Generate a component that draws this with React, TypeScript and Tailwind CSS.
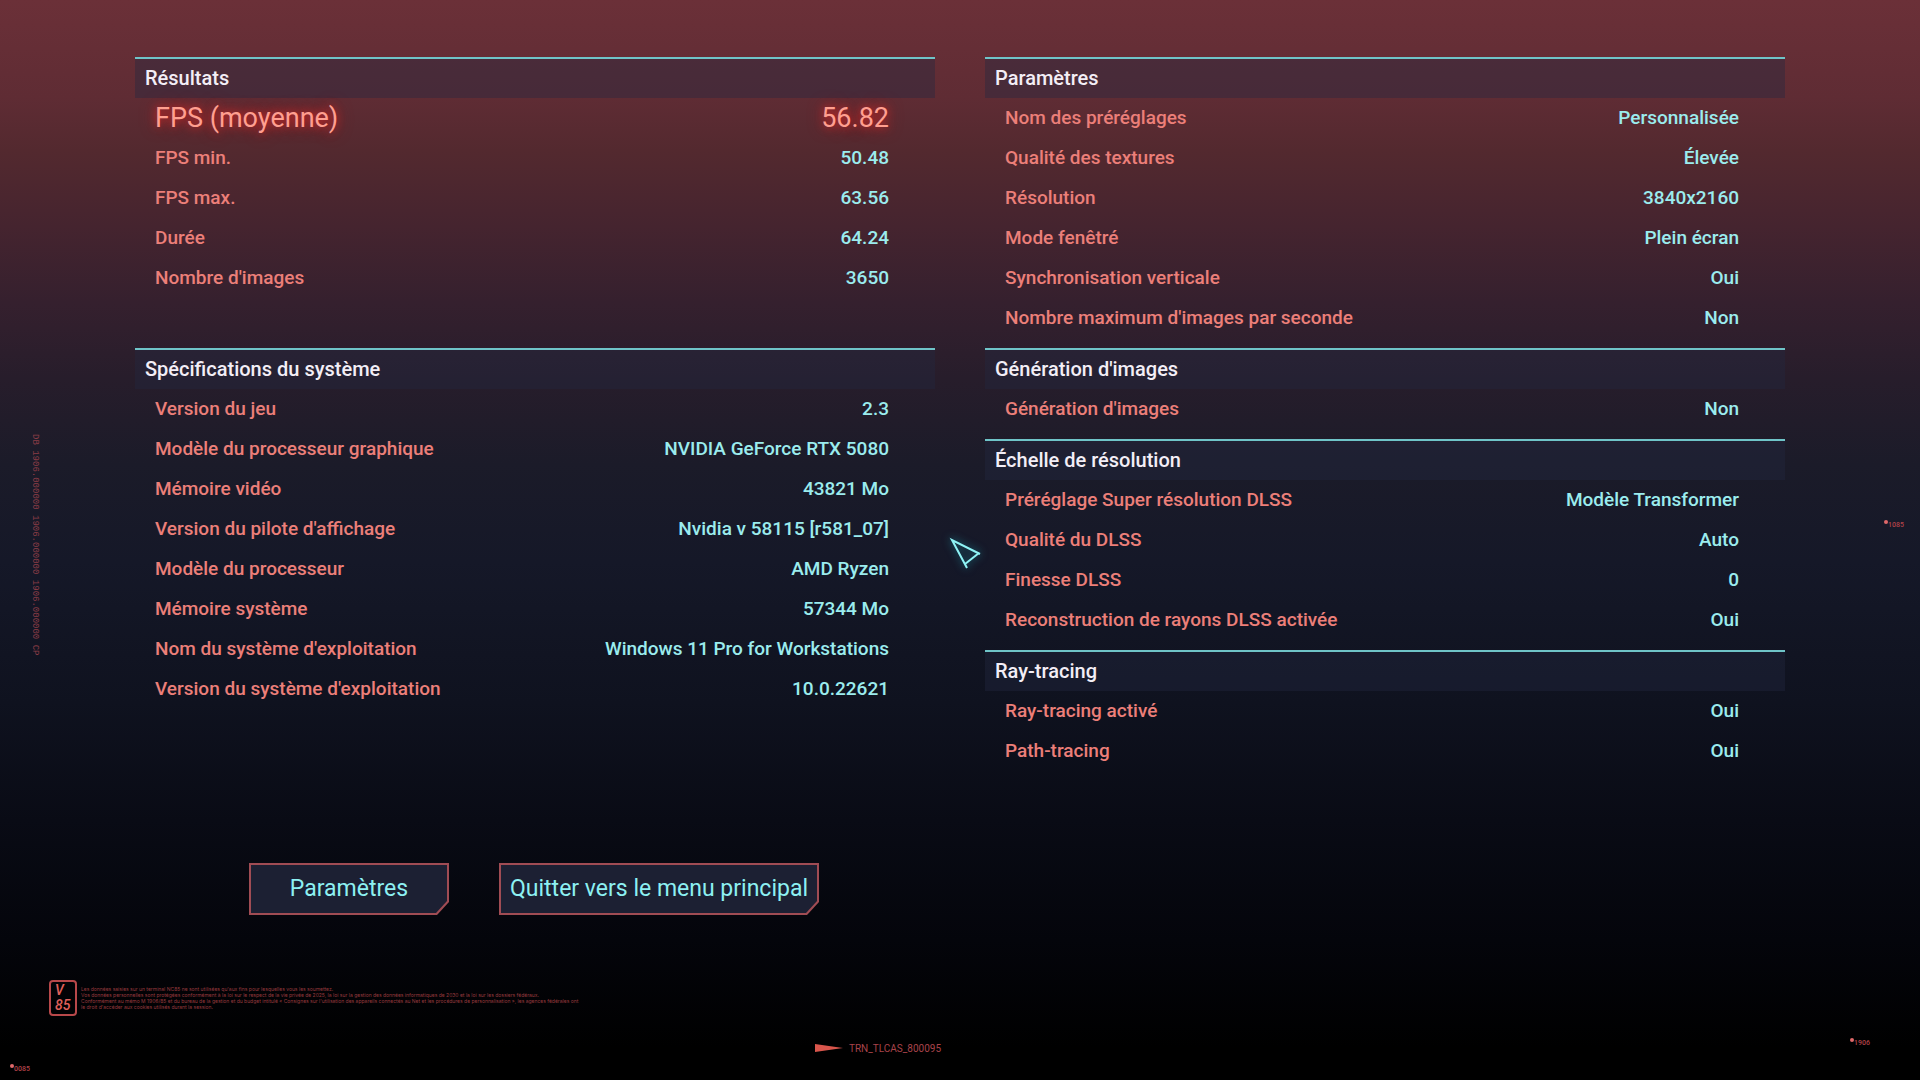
type Row = { label: string; value: string; highlight?: boolean }
type Section = { title: string; rows: Row[] }

const RESULTS: Section[] = [
  {
    title: "Résultats",
    rows: [
      { label: "FPS (moyenne)", value: "56.82", highlight: true },
      { label: "FPS min.", value: "50.48" },
      { label: "FPS max.", value: "63.56" },
      { label: "Durée", value: "64.24" },
      { label: "Nombre d'images", value: "3650" },
    ],
  },
  {
    title: "Spécifications du système",
    rows: [
      { label: "Version du jeu", value: "2.3" },
      { label: "Modèle du processeur graphique", value: "NVIDIA GeForce RTX 5080" },
      { label: "Mémoire vidéo", value: "43821 Mo" },
      { label: "Version du pilote d'affichage", value: "Nvidia v 58115 [r581_07]" },
      { label: "Modèle du processeur", value: "AMD Ryzen" },
      { label: "Mémoire système", value: "57344 Mo" },
      { label: "Nom du système d'exploitation", value: "Windows 11 Pro for Workstations" },
      { label: "Version du système d'exploitation", value: "10.0.22621" },
    ],
  },
]

const SETTINGS: Section[] = [
  {
    title: "Paramètres",
    rows: [
      { label: "Nom des préréglages", value: "Personnalisée" },
      { label: "Qualité des textures", value: "Élevée" },
      { label: "Résolution", value: "3840x2160" },
      { label: "Mode fenêtré", value: "Plein écran" },
      { label: "Synchronisation verticale", value: "Oui" },
      { label: "Nombre maximum d'images par seconde", value: "Non" },
    ],
  },
  {
    title: "Génération d'images",
    rows: [{ label: "Génération d'images", value: "Non" }],
  },
  {
    title: "Échelle de résolution",
    rows: [
      { label: "Préréglage Super résolution DLSS", value: "Modèle Transformer" },
      { label: "Qualité du DLSS", value: "Auto" },
      { label: "Finesse DLSS", value: "0" },
      { label: "Reconstruction de rayons DLSS activée", value: "Oui" },
    ],
  },
  {
    title: "Ray-tracing",
    rows: [
      { label: "Ray-tracing activé", value: "Oui" },
      { label: "Path-tracing", value: "Oui" },
    ],
  },
]

const LEGAL = [
  "Les données saisies sur un terminal NC85 ne sont utilisées qu'aux fins pour lesquelles vous les soumettez.",
  "Vos données personnelles sont protégées conformément à la loi sur le respect de la vie privée de 2025, la loi sur la gestion des données informatiques de 2030 et la loi sur les dossiers fédéraux.",
  "Conformément au mémo M 1906/85 et du bureau de la gestion et du budget intitulé « Consignes sur l'utilisation des appareils connectés au Net et les procédures de personnalisation », les agences fédérales ont",
  "le droit d'accéder aux cookies utilisés durant la session.",
]

function Panel({ section }: { section: Section }) {
  return (
    <section className="border-t-2 border-[#6fc4c8]">
      <h2 className="h-[39px] bg-[#242840]/40 pl-[10px] text-[20px] font-medium leading-[39px] text-[#f3eef6]">
        {section.title}
      </h2>
      <table className="w-full border-collapse">
        <tbody>
          {section.rows.map((row) =>
            row.highlight ? (
              <tr
                key={row.label}
                className="h-10 text-[27px] leading-10 text-[#ff9f90] [text-shadow:0_0_8px_#d02c2c,0_0_16px_#b02020]"
              >
                <th scope="row" className="p-0 pl-5 text-left font-normal">{row.label}</th>
                <td className="p-0 pr-[46px] text-right">{row.value}</td>
              </tr>
            ) : (
              <tr key={row.label} className="h-10 text-[19px] font-medium leading-10">
                <th scope="row" className="p-0 pl-5 text-left font-medium text-[#ec7f79]">{row.label}</th>
                <td className="p-0 pr-[46px] text-right text-[#9becee]">{row.value}</td>
              </tr>
            ),
          )}
        </tbody>
      </table>
    </section>
  )
}

function CutButton({ children }: { children: string }) {
  return (
    <button
      type="button"
      className="h-[52px] min-w-[200px] bg-[#a04c54] p-[2px] text-[23px] text-[#8df0f2] [clip-path:polygon(0_0,100%_0,100%_calc(100%-13px),calc(100%-12px)_100%,0_100%)]"
    >
      <span className="flex h-full items-center justify-center bg-[#1c2033] px-[9px] [clip-path:polygon(0_0,100%_0,100%_calc(100%-12px),calc(100%-11px)_100%,0_100%)]">
        {children}
      </span>
    </button>
  )
}

function Marker({ code }: { code: string }) {
  return (
    <div className="flex items-start text-[7px] font-medium leading-[8px] text-[#b04248]">
      <span className="h-[4px] w-[4px] rounded-full bg-[#e0686a]" />
      <span className="pt-[1px]">{code}</span>
    </div>
  )
}

export default function App() {
  return (
    <div className="relative flex min-h-screen flex-col bg-black bg-[linear-gradient(to_bottom,#6b3038_0%,#5f2c34_9%,#53292f_14%,#45242f_21%,#35202e_28%,#271d2b_35%,#1b1b29_43%,#151828_52%,#0f121f_65%,#090b15_76%,#04050b_87%,#000_97%)] font-[Roboto,'Liberation_Sans',sans-serif]">
      <div className="grid grid-cols-[135px_1fr_135px]">
        <aside className="pl-[29px] pt-[434px]">
          <p className="font-['Liberation_Mono',monospace] text-[9px] leading-[12px] text-[#8a3c46] [writing-mode:vertical-rl]">
            DB 1906.000000 1906.000000 1906.000000 CP
          </p>
        </aside>

        <main className="pt-[57px]">
          <div className="grid grid-cols-2 gap-[50px]">
            <div className="flex flex-col gap-[50px]">
              {RESULTS.map((s) => (
                <Panel key={s.title} section={s} />
              ))}
            </div>
            <div className="flex flex-col gap-[10px]">
              {SETTINGS.map((s) => (
                <Panel key={s.title} section={s} />
              ))}
            </div>
          </div>
          <div className="flex gap-[50px] pl-[114px] pt-[92px]">
            <CutButton>Paramètres</CutButton>
            <CutButton>Quitter vers le menu principal</CutButton>
          </div>
        </main>

        <aside className="flex justify-end pr-4 pt-[520px]">
          <Marker code="1085" />
        </aside>
      </div>

      <footer className="mt-[65px] flex flex-col">
        <div className="flex gap-1 pl-[49px]">
          <div className="flex h-9 w-7 flex-col justify-center rounded-[4px] border-2 border-[#b8484a] pl-1 text-[14px] font-medium italic leading-[15px] text-[#e0605a]">
            <span>V</span>
            <span>85</span>
          </div>
          <div className="pt-[6px] font-[Inter,sans-serif] text-[5px] leading-[6px] text-[#983a3e]">
            {LEGAL.map((line) => (
              <p key={line}>{line}</p>
            ))}
          </div>
        </div>
        <div className="grid grid-cols-3 pt-[22px]">
          <div className="pl-[10px] pt-[26px]">
            <Marker code="0085" />
          </div>
          <div className="flex h-5 items-center justify-center gap-[6px] pr-[164px] text-[10px] text-[#a8434a]">
            <svg width="28" height="10" viewBox="0 0 28 10" aria-hidden="true">
              <path d="M0 1 L28 5 L0 9 Z" fill="#d9564c" />
            </svg>
            TRN_TLCAS_800095
          </div>
          <div className="flex justify-end pr-[50px]">
            <Marker code="1906" />
          </div>
        </div>
      </footer>

      {/* mouse pointer */}
      <svg
        className="absolute left-[947px] top-[535px] drop-shadow-[0_0_4px_#1a7f90]"
        width="38"
        height="38"
        viewBox="0 0 38 38"
        fill="none"
        stroke="#8ff3f5"
        strokeWidth="2"
        aria-hidden="true"
      >
        <path d="M33 19 L5 5 L20 33" />
        <path d="M32 18 L18 29" />
      </svg>
    </div>
  )
}
